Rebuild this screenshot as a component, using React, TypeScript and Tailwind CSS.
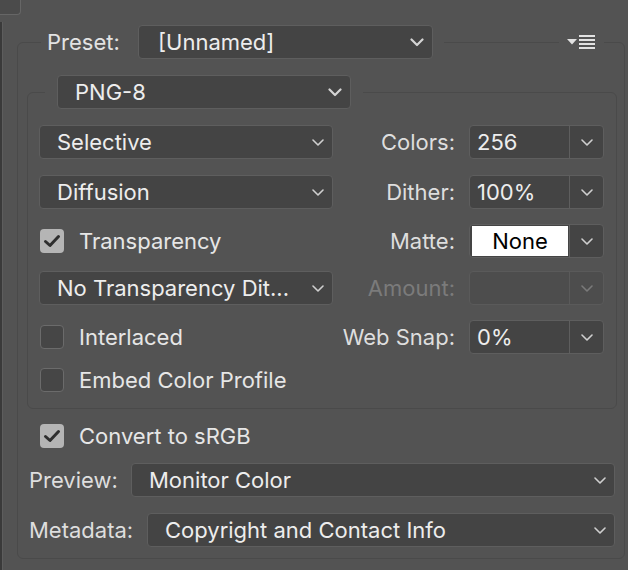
import React from "react";
import clsx from "clsx";

const Chevron = ({ bold = false, dim = false }: { bold?: boolean; dim?: boolean }) =>
  bold ? (
    <svg width="14" height="9" viewBox="0 0 14 9" fill="none">
      <polyline
        points="1.5,1.5 7,7 12.5,1.5"
        stroke="#d4d4d4"
        strokeWidth="2.2"
        strokeLinecap="round"
        strokeLinejoin="round"
      />
    </svg>
  ) : (
    <svg width="12" height="7" viewBox="0 0 12 7" fill="none">
      <polyline
        points="1,1 6,6 11,1"
        stroke={dim ? "#7a7a7a" : "#cfcfcf"}
        strokeWidth="1.6"
        strokeLinecap="round"
        strokeLinejoin="round"
      />
    </svg>
  );

const MenuIcon = () => (
  <svg width="29" height="14" viewBox="0 0 29 14">
    <polygon points="0,4 10,4 5,9.5" fill="#e2e2e2" />
    <rect x="12" y="0" width="16" height="2" fill="#e2e2e2" />
    <rect x="12" y="4" width="16" height="2" fill="#e2e2e2" />
    <rect x="12" y="8" width="16" height="2" fill="#e2e2e2" />
    <rect x="12" y="12" width="16" height="2" fill="#e2e2e2" />
  </svg>
);

function Dropdown({
  value,
  className,
  bold = false,
  textPad = "pl-[17px]",
}: {
  value: string;
  className?: string;
  bold?: boolean;
  textPad?: string;
}) {
  return (
    <div
      className={clsx(
        "flex h-[34px] shrink-0 items-center justify-between rounded-[4px] border border-[#5e5e5e] bg-[#444444] pr-[8px]",
        textPad,
        className
      )}
    >
      <span className="whitespace-nowrap text-[#ededed]">{value}</span>
      <Chevron bold={bold} />
    </div>
  );
}

function Combo({
  value,
  matte = false,
  disabled = false,
}: {
  value?: string;
  matte?: boolean;
  disabled?: boolean;
}) {
  return (
    <div
      className={clsx(
        "flex h-[34px] w-[135px] shrink-0 rounded-[4px] border",
        disabled ? "border-[#5a5a5a] bg-[#4d4d4d]" : "border-[#5e5e5e] bg-[#444444]"
      )}
    >
      {matte ? (
        <div className="flex flex-1 p-[1px] pl-[2px]">
          <div className="flex flex-1 items-center justify-center bg-white text-black">
            {value}
          </div>
        </div>
      ) : (
        <div className="flex flex-1 items-center pl-[7px] text-[#ededed]">{value}</div>
      )}
      <div
        className={clsx(
          "flex w-[34px] items-center justify-center border-l",
          disabled ? "border-[#5a5a5a]" : "border-[#5e5e5e]"
        )}
      >
        <Chevron dim={disabled} />
      </div>
    </div>
  );
}

function Checkbox({ checked, label }: { checked: boolean; label: string }) {
  return (
    <div className="flex items-center">
      {checked ? (
        <div className="flex h-[24px] w-[24px] items-center justify-center rounded-[4px] bg-[#b5b5b5]">
          <svg width="24" height="24" viewBox="0 0 24 24" fill="none">
            <path
              d="M5.5 12.5 L10 16.5 L18.5 7.5"
              stroke="#2f2f2f"
              strokeWidth="3"
              strokeLinecap="round"
              strokeLinejoin="round"
            />
          </svg>
        </div>
      ) : (
        <div className="h-[24px] w-[24px] rounded-[4px] border border-[#6b6b6b] bg-[#464646]" />
      )}
      <span className="ml-[15px] text-[#e6e6e6]">{label}</span>
    </div>
  );
}

export default function App() {
  return (
    <div className="flex h-[570px] w-[628px] overflow-hidden bg-[#535353] font-[Inter,sans-serif] text-[22px] leading-none text-[#dedede]">
      {/* edge of the neighbouring panel */}
      <div className="flex w-[17px] shrink-0 flex-col">
        <div className="h-[15px] w-[21px] shrink-0 rounded-br-[4px] border-b border-r border-[#666666] bg-[#4b4b4b]" />
        <div className="mt-[7px] w-[3px] flex-1 border-r border-[#5d5d5d] bg-[#3a3a3a]" />
      </div>

      <div className="mr-[3px] mt-[42px] flex flex-1 flex-col self-start rounded-[6px] border border-[#4a4a4a] pb-[11px]">
        {/* preset row sits on the frame line */}
        <div className="-mt-[18px] flex h-[34px] items-center">
          <div className="ml-[23px] flex items-center bg-[#535353] pl-[6px] pr-[11px]">
            <span className="w-[91px] text-[#e3e3e3]">Preset:</span>
            <Dropdown value="[Unnamed]" className="w-[295px]" bold textPad="pl-[19px]" />
          </div>
          <div className="ml-auto mr-[20px] flex items-center bg-[#535353] px-[8px] py-[3px]">
            <MenuIcon />
          </div>
        </div>

        <div className="ml-[9px] mr-[7px] mt-[33px] flex flex-col rounded-[6px] border border-[#4a4a4a] pb-[16px] pl-[11px] pr-[12px]">
          <div className="-mt-[18px] flex">
            <div className="ml-[6px] bg-[#535353] px-[12px]">
              <Dropdown value="PNG-8" className="w-[294px]" bold />
            </div>
          </div>

          <div className="mt-[16px] flex h-[34px] items-center">
            <Dropdown value="Selective" className="w-[294px]" />
            <span className="flex-1 pr-[14px] text-right">Colors:</span>
            <Combo value="256" />
          </div>

          <div className="mt-[16px] flex h-[34px] items-center">
            <Dropdown value="Diffusion" className="w-[294px]" />
            <span className="flex-1 pr-[14px] text-right">Dither:</span>
            <Combo value="100%" />
          </div>

          <div className="mt-[15px] flex h-[34px] items-center">
            <div className="w-[294px] pl-[1px]">
              <Checkbox checked label="Transparency" />
            </div>
            <span className="flex-1 pr-[14px] text-right">Matte:</span>
            <Combo value="None" matte />
          </div>

          <div className="mt-[13px] flex h-[34px] items-center">
            <Dropdown value="No Transparency Dit..." className="w-[294px]" />
            <span className="flex-1 pr-[14px] text-right text-[#7b7b7b]">Amount:</span>
            <Combo disabled />
          </div>

          <div className="mt-[15px] flex h-[34px] items-center">
            <div className="w-[294px] pl-[1px]">
              <Checkbox checked={false} label="Interlaced" />
            </div>
            <span className="flex-1 pr-[14px] text-right">Web Snap:</span>
            <Combo value="0%" />
          </div>

          <div className="mt-[14px] flex h-[24px] items-center pl-[1px]">
            <Checkbox checked={false} label="Embed Color Profile" />
          </div>
        </div>

        <div className="mt-[15px] flex h-[24px] items-center pl-[22px]">
          <Checkbox checked label="Convert to sRGB" />
        </div>

        <div className="mt-[15px] flex h-[34px] items-center pl-[11px] pr-[9px]">
          <span className="w-[102px] shrink-0">Preview:</span>
          <Dropdown value="Monitor Color" className="flex-1" />
        </div>

        <div className="mt-[16px] flex h-[34px] items-center pl-[11px] pr-[9px]">
          <span className="w-[118px] shrink-0">Metadata:</span>
          <Dropdown value="Copyright and Contact Info" className="flex-1" />
        </div>
      </div>
    </div>
  );
}
